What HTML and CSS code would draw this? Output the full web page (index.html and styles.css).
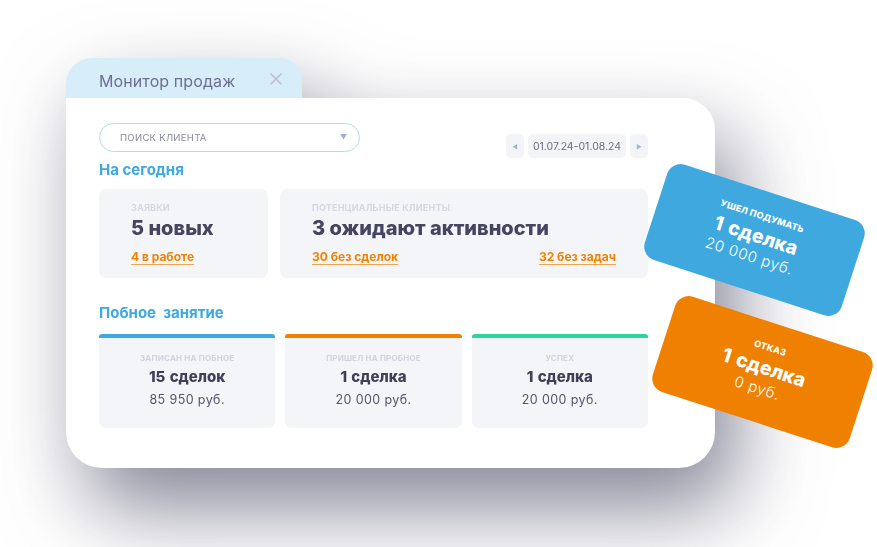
FILE: index.html
```html
<!DOCTYPE html>
<html lang="ru">
<head>
<meta charset="utf-8">
<link rel="stylesheet" href="styles.css">
</head>
<body>
<div class="scene">
  <div class="window">
    <div class="tab">
      <span class="tab-title">Монитор продаж</span>
      <svg class="tab-close" width="12" height="12" viewBox="0 0 12 12"><path d="M1 1L11 11M11 1L1 11" stroke="#b9bdc9" stroke-width="1.5" fill="none" stroke-linecap="round"/></svg>
    </div>
    <div class="panel">
      <div class="toolbar">
        <div class="search">
          <span class="search-text">ПОИСК КЛИЕНТА</span>
          <span class="search-arrow">▼</span>
        </div>
        <div class="dates">
          <span class="date-btn">◀</span>
          <span class="date-range">01.07.24-01.08.24</span>
          <span class="date-btn">▶</span>
        </div>
      </div>
      <h2 class="section-title">На сегодня</h2>
      <div class="today">
        <div class="stat">
          <div class="stat-label">ЗАЯВКИ</div>
          <div class="stat-value">5 новых</div>
          <div class="stat-links"><a class="link">4 в работе</a></div>
        </div>
        <div class="stat">
          <div class="stat-label">ПОТЕНЦИАЛЬНЫЕ КЛИЕНТЫ</div>
          <div class="stat-value">3 ожидают активности</div>
          <div class="stat-links"><a class="link">30 без сделок</a><a class="link">32 без задач</a></div>
        </div>
      </div>
      <h2 class="section-title second">Побное&nbsp; занятие</h2>
      <div class="trial">
        <div class="trial-card blue">
          <div class="trial-label">ЗАПИСАН НА ПОБНОЕ</div>
          <div class="trial-value">15 сделок</div>
          <div class="trial-sum">85 950 руб.</div>
        </div>
        <div class="trial-card orange">
          <div class="trial-label">ПРИШЕЛ НА ПРОБНОЕ</div>
          <div class="trial-value">1 сделка</div>
          <div class="trial-sum">20 000 руб.</div>
        </div>
        <div class="trial-card green">
          <div class="trial-label">УСПЕХ</div>
          <div class="trial-value">1 сделка</div>
          <div class="trial-sum">20 000 руб.</div>
        </div>
      </div>
    </div>
  </div>
  <div class="float-card float-blue">
    <div class="float-label">УШЕЛ ПОДУМАТЬ</div>
    <div class="float-value">1 сделка</div>
    <div class="float-sum">20 000 руб.</div>
  </div>
  <div class="float-card float-orange">
    <div class="float-label">ОТКАЗ</div>
    <div class="float-value">1 сделка</div>
    <div class="float-sum">0 руб.</div>
  </div>
</div>
</body>
</html>
```
FILE: styles.css
```css
* { box-sizing: border-box; margin: 0; padding: 0; }
html, body { width: 877px; height: 547px; overflow: hidden; background: #fff; }
body { font-family: Inter, "Open Sans", sans-serif; color: #44455e; }

.scene { position: relative; width: 877px; height: 547px; padding: 58px 0 0 66px; }

.window {
  width: 649px;
  filter: drop-shadow(20px 40px 42px rgba(45, 45, 75, 0.58));
}

.tab {
  width: 236px;
  height: 40px;
  background: #d7eefa;
  border-radius: 26px 22px 0 0;
  display: flex;
  align-items: center;
  justify-content: space-between;
  padding: 6px 20px 0 33px;
}
.tab-title { font-size: 16px; color: #6c6f93; letter-spacing: 0.1px; }
.tab-close { display: block; margin-top: -4px; }

.panel {
  background: #fff;
  height: 370px;
  border-radius: 0 32px 36px 36px;
  padding: 25px 67px 0 33px;
}

.toolbar { display: flex; justify-content: space-between; align-items: flex-start; }
.search {
  width: 261px;
  height: 29px;
  border: 1px solid #b9d9f1;
  border-radius: 15px;
  display: flex;
  align-items: center;
  justify-content: space-between;
  padding: 0 12px 0 20px;
}
.search-text { font-size: 9.5px; color: #8a8c98; letter-spacing: 0.3px; }
.search-arrow { font-size: 7px; color: #9ab0c8; }

.dates { display: flex; gap: 4px; margin-top: 11px; }
.date-btn, .date-range {
  height: 24px;
  background: #f2f4f8;
  border-radius: 5px;
  display: flex;
  align-items: center;
  justify-content: center;
}
.date-btn { width: 18px; font-size: 6px; color: #a5b6cf; }
.date-range { width: 98px; font-size: 10.5px; color: #6c6d7c; }

.section-title {
  font-size: 15px;
  font-weight: 700;
  color: #3ea8e0;
  line-height: 20px;
  margin-top: 2px;
}
.section-title.second { margin-top: 25px; }

.today {
  display: grid;
  grid-template-columns: 169px 1fr;
  gap: 12px;
  margin-top: 9px;
}
.stat {
  background: #f4f5f9;
  border-radius: 7px;
  height: 89px;
  padding: 13px 32px 0 32px;
}
.stat-label { font-size: 9px; font-weight: 700; color: #d6d7e0; line-height: 12px; letter-spacing: 0.2px; }
.stat-value { font-size: 20px; font-weight: 800; color: #44455e; line-height: 26px; margin-top: 1px; }
.stat-links { display: flex; justify-content: space-between; margin-top: 8px; }
.link {
  font-size: 12px;
  font-weight: 700;
  color: #f08200;
  line-height: 16px;
  text-decoration: underline;
  text-decoration-color: rgba(240, 130, 0, 0.7);
  text-underline-offset: 3px;
  text-decoration-thickness: 1px;
}

.trial {
  display: grid;
  grid-template-columns: repeat(3, 1fr);
  gap: 10px;
  margin-top: 11px;
}
.trial-card {
  background: #f4f5f9;
  border-radius: 3px 3px 7px 7px;
  height: 94px;
  border-top: 4px solid #3ea8e0;
  text-align: center;
  padding-top: 14px;
}
.trial-card.orange { border-top-color: #f08200; }
.trial-card.green { border-top-color: #2fd49a; }
.trial-label { font-size: 8px; font-weight: 700; color: #d2d3dc; line-height: 12px; letter-spacing: 0.2px; }
.trial-value { font-size: 15px; font-weight: 800; color: #3f4058; line-height: 20px; margin-top: 3px; word-spacing: 1px; }
.trial-sum { font-size: 12.5px; color: #55566a; line-height: 18px; margin-top: 4px; letter-spacing: 0.4px; }

.float-card {
  position: absolute;
  width: 207px;
  height: 100px;
  border-radius: 14px;
  color: #fff;
  text-align: center;
  display: flex;
  flex-direction: column;
  align-items: center;
  justify-content: center;
  padding-bottom: 6px;
  transform: rotate(18deg);
}
.float-blue { background: #3ea8df; left: 651px; top: 190px; }
.float-orange { background: #f08000; left: 659px; top: 322px; }
.float-label { font-size: 9px; font-weight: 800; letter-spacing: 0.2px; line-height: 13px; }
.float-value { font-size: 19.5px; font-weight: 800; line-height: 24px; margin-top: 2px; word-spacing: 2px; }
.float-sum { font-size: 15px; font-weight: 300; line-height: 20px; letter-spacing: 0.6px; }
```
